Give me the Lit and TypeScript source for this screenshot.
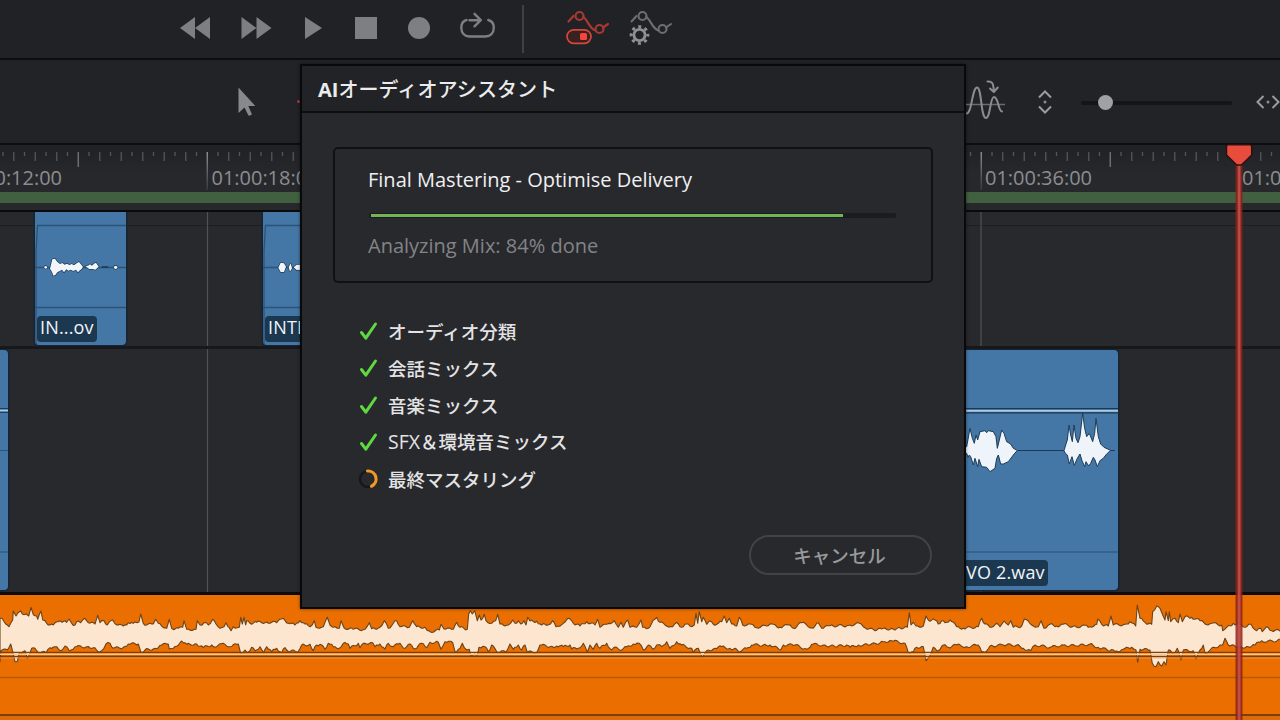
import { LitElement, html, svg, css } from "lit";
import { customElement, property } from "lit/decorators.js";

/* Peak outlines as flat x,y lists, stored in thirds of a pixel. */
type Part = { x: number; y: number; d: string };

const TOP: Part[] = [
  { x: 0, y: 580, d: "0,115 6,115 27,140 38,120 40,93 48,108 62,93 72,104 86,108 93,82 100,104 110,108 113,118 123,93 128,120 140,130 160,135 180,122 186,127 194,122 200,127 207,117 215,130 225,135 235,123 242,128 255,115 265,128 285,132 293,106 300,128 312,122 322,135 338,120 350,135 370,138 385,128 400,130 417,126 422,102 430,130 440,135 460,132 467,118 475,130 500,145 508,118 515,145 535,145 548,142 552,122 560,148 588,148 592,122 600,135 612,128 625,135 638,118 648,132 660,145 672,140 678,128 693,152 700,140 718,142 722,112 727,132 732,112 737,135 740,122 750,130 770,127 800,126 830,128 850,115 865,130 885,135 900,122 915,132 930,140 943,122 948,142 970,140 982,112 990,135 1000,142 1018,145 1023,122 1032,143 1060,148 1095,148 1108,128 1115,146 1140,142 1153,122 1165,145 1180,130 1190,122 1200,140 1228,142 1238,122 1250,140 1275,142 1288,153" },
  { x: 430, y: 590, d: "0,125 28,120 33,103 42,117 70,118 80,97 90,112 112,118 116,72 121,62 127,72 134,62 142,92 148,75 153,90 163,73 168,92 185,100 197,92 203,73 210,102 235,105 248,90 255,100 265,92 272,102 282,92 288,105 293,82 300,93 320,94 335,105 355,104 368,92 378,110 400,100 418,85 430,100 450,108 470,95 495,105 503,88 510,112 530,103 553,92 565,112 573,97 580,112 593,90 600,112 620,112 633,90 638,112 655,115 665,100 680,82 690,97 705,105 728,110 740,97 755,112 770,102 785,110 793,105 798,70 803,100 808,65 815,95 820,82 830,103 838,93 850,103 865,100 875,95 883,78 890,98 898,85 905,102 920,108 928,82 938,105 960,102 975,112 1010,108 1030,103 1050,112 1075,105 1090,115 1115,98 1130,105 1150,115 1165,98 1175,115 1200,107 1250,107 1258,106" },
  { x: 850, y: 590, d: "0,105 28,100 40,110 75,122 100,115 130,118 160,115 172,112 178,68 183,105 190,97 198,108 220,108 228,78 235,90 255,90 265,102 275,92 285,98 300,90 320,110 340,115 385,110 395,85 405,102 420,112 440,100 450,110 462,93 475,105 482,92 490,112 515,108 523,87 545,105 565,110 573,92 582,115 600,103 620,108 640,103 680,112 700,105 715,112 740,103 743,87 755,103 775,108 783,78 790,105 825,103 840,95 857,108 862,45 870,85 885,97 905,103 908,65 920,48 930,55 937,72 945,90 948,65 955,92 958,65 962,95 975,85 985,98 990,72 997,95 1005,80 1025,82 1050,92 1065,102 1085,100 1115,105 1118,122 1130,112 1150,100 1190,110 1203,103 1220,122 1232,115 1237,125 1250,110 1265,122 1296,122" },
];

const BOTTOM: Part[] = [
  { x: 0, y: 580, d: "0,245 3,212 22,210 32,192 38,215 45,245 52,245 58,218 75,212 82,235 95,205 105,205 115,218 138,218 150,203 165,200 180,212 195,198 208,212 225,200 260,200 285,203 297,217 305,212 318,192 330,190 340,205 370,202 385,192 415,192 423,217 435,210 465,205 485,195 505,192 508,207 520,205 545,183 560,193 590,192 610,203 635,195 650,200 670,190 690,200 715,192 722,220 735,210 742,218 755,202 765,212 780,200 790,218 800,200 815,215 830,205 845,218 855,203 870,215 880,210 893,217 905,195 930,193 940,212 950,195 960,193 975,208 985,190 1000,200 1018,205 1030,190 1045,192 1050,205 1075,190 1080,203 1090,190 1118,188 1125,200 1140,192 1155,207 1165,190 1180,200 1200,190 1215,205 1230,192 1245,207 1265,190 1280,203 1288,190" },
  { x: 430, y: 590, d: "0,157 25,157 33,178 45,155 68,158 75,185 90,175 97,160 110,180 118,178 122,196 142,196 147,172 165,170 175,185 185,165 200,185 215,182 228,187 240,162 250,178 265,165 275,180 285,165 292,187 322,185 330,165 360,170 380,168 400,170 420,165 425,177 445,175 460,160 472,187 480,165 490,178 500,160 510,175 530,160 545,180 560,172 575,180 590,170 610,162 628,160 640,180 655,165 668,178 680,165 695,170 710,155 720,175 740,155 755,165 785,175 790,187 805,175 817,202 830,182 855,175 875,170 900,175 920,178 928,187 935,182 950,175 965,165 1000,165 1020,165 1052,180 1060,165 1095,165 1130,178 1145,163 1180,165 1215,170 1250,165 1258,168" },
  { x: 850, y: 590, d: "0,172 25,165 60,165 100,155 125,152 165,160 175,188 190,185 200,172 220,170 228,212 243,190 250,172 265,182 280,165 295,172 320,165 350,170 385,165 395,185 410,183 420,168 460,165 500,165 520,175 542,182 555,165 600,172 640,165 680,168 720,162 745,172 780,182 800,183 820,178 845,172 858,180 863,217 870,178 900,180 907,220 918,230 925,215 935,228 942,215 948,225 955,180 970,190 982,175 993,210 1000,180 1020,185 1030,182 1038,207 1050,180 1060,165 1065,190 1080,180 1110,165 1118,165 1125,145 1135,165 1165,172 1195,170 1215,165 1235,152 1250,155 1296,150" },
];

const TRACK_TOP = 595;

function outline(parts: Part[], phase: number): number[][] {
  const key: number[][] = [];
  for (const p of parts) {
    for (const pair of p.d.split(" ")) {
      const [x, y] = pair.split(",").map(Number);
      key.push([p.x + x / 3, p.y + y / 3 - TRACK_TOP]);
    }
  }
  const out: number[][] = [];
  key.forEach(([x, y], i) => {
    out.push([x, y]);
    const next = key[i + 1];
    if (!next) return;
    const steps = Math.floor((next[0] - x) / 1.6);
    for (let s = 1; s < steps; s++) {
      const t = s / steps;
      const wobble = Math.sin((i * 7 + s * 5 + phase) * 2.3) * 1.3;
      out.push([x + (next[0] - x) * t, y + (next[1] - y) * t + wobble]);
    }
  });
  return out;
}

const MUSIC = [...outline(TOP, 0), ...outline(BOTTOM, 4).reverse()]
  .map(([x, y]) => `${x.toFixed(1)},${y.toFixed(1)}`)
  .join(" ");

const ICONS = {
  rewind: { w: 30, h: 22, body: svg`<path fill="currentColor" d="M15 0v22L0 11zM30 0v22L15 11z"/>` },
  forward: { w: 31, h: 22, body: svg`<path fill="currentColor" d="M.5 0v22l15-11zM15.500 0v22l15-11z"/>` },
  play: { w: 17, h: 22, body: svg`<path fill="currentColor" d="M0 0v22l17-11z"/>` },
  stop: { w: 22, h: 22, body: svg`<path fill="currentColor" d="M0 0h22v22H0z"/>` },
  record: { w: 22, h: 22, body: svg`<circle fill="currentColor" cx="11" cy="11" r="11"/>` },
  loop: {
    w: 36, h: 28,
    body: svg`<g fill="none" stroke="currentColor" stroke-width="2.400" stroke-linecap="round" stroke-linejoin="round"><path d="M6.500 8C3 9 1.300 12 1.300 15.500c0 5.500 3.200 9 8 9h16c5 0 8.500-3.500 8.500-9 0-3.800-2-6.500-5.500-7.500"/><path d="M9.500 8.200H20M14.500 1.800l6.300 6.300-6.300 6.200"/></g>`,
  },
  autoOn: {
    w: 43, h: 36,
    body: svg`<g fill="none" stroke="#a83831" stroke-width="2.200"><path d="M2.500 11.500l5-5.500M17.500 7c5 4 6 12 12 13.500M37 17.500l5-3.500" stroke-linecap="round"/><circle cx="13.500" cy="6" r="4"/><circle cx="33.500" cy="19" r="4"/></g><rect x="1" y="19.800" width="24" height="13.500" rx="6.700" fill="#3a2020" stroke="#d4473a" stroke-width="1.700"/><rect x="14" y="23" width="7" height="7" rx="1.500" fill="#f4473a"/>`,
  },
  autoSetup: {
    w: 43, h: 36,
    body: svg`<g fill="none" stroke="#6d6e70" stroke-width="2.100"><path d="M2.500 11.500l5-5.500M17.500 7c5 4 6 12 12 13.500M37 17.500l5-3.500" stroke-linecap="round"/><circle cx="13.500" cy="6" r="4"/><circle cx="33.500" cy="19" r="4"/></g><g fill="none" stroke="#8f9092"><circle cx="10.500" cy="25" r="5.600" stroke-width="2.800"/><circle cx="10.500" cy="25" r="8.300" stroke-width="3" stroke-dasharray="3 3.519" stroke-dashoffset="1.500"/></g>`,
  },
  pointer: { w: 20, h: 30, body: svg`<path fill="currentColor" d="M.5.500v25.500l6-5.500 3.800 7.800q1.500 1.200 3.600-1l-3.600-8.300h7z"/>` },
  ripple: {
    w: 40, h: 42,
    body: svg`<g fill="none" stroke="#8b8c8e" stroke-width="2" stroke-linecap="round" stroke-linejoin="round"><path d="M0 25.500h38.500" stroke="#6a6b6d" stroke-width="1.300"/><path d="M0 34.500C6 36 6 8.500 11 8.500S14.500 39 20 39c4.500 0 4-21 8-21 4.500 0 4 14 8 14.500"/><path d="M21.500 2.500c4-.5 6 1 6.300 9M24 9.500l3.800 3.500 4-4.500"/></g>`,
  },
  vertical: {
    w: 16, h: 26,
    body: svg`<g fill="none" stroke="#9b9c9e" stroke-width="2"><path d="M2 8.500L8 2.500l6 6M2 17.500l6 6 6-6"/></g><circle cx="8" cy="13" r="1.500" fill="#8a8b8d"/>`,
  },
  horizontal: {
    w: 26, h: 16,
    body: svg`<g fill="none" stroke="#9b9c9e" stroke-width="2"><path d="M8.500 2L2.500 8l6 6M17.500 2l6 6-6 6"/></g><circle cx="13" cy="8" r="1.500" fill="#8a8b8d"/>`,
  },
  check: { w: 20, h: 20, body: svg`<path d="M3.500 11.500l4.300 5.700L17.500 3" fill="none" stroke="#60d83f" stroke-width="3" stroke-linecap="round" stroke-linejoin="round"/>` },
  spinner: {
    w: 20, h: 20,
    body: svg`<circle cx="10" cy="10" r="8" fill="none" stroke="#17181a" stroke-width="2.600"/><path d="M9.500 2a8 8 0 0 1 4 15.200" fill="none" stroke="#f09a26" stroke-width="3.200" stroke-linecap="round"/>`,
  },
};

type IconName = keyof typeof ICONS;

@customElement("ui-icon")
export class UiIcon extends LitElement {
  @property() name: IconName = "play";
  static styles = css`
    :host { display: block; flex: none; }
    svg { display: block; overflow: visible; }
  `;
  render() {
    const i = ICONS[this.name];
    return html`<svg width=${i.w} height=${i.h} viewBox="0 0 ${i.w} ${i.h}">${i.body}</svg>`;
  }
}

@customElement("time-ruler")
export class TimeRuler extends LitElement {
  static styles = css`
    :host { display: block; height: 47px; position: relative; background: linear-gradient(#202125, #27282c 60%); }
    svg { display: block; }
    text { font: 20px "Open Sans", "Noto Sans", sans-serif; fill: #8c8d90; }
  `;
  render() {
    const ticks = [];
    for (let i = 0; i < 124; i++) {
      const x = -51 + i * 10.75;
      const big = i % 24 === 0;
      const h = big ? 38 : i % 12 === 0 ? 15 : i % 2 === 0 ? 9 : 4;
      ticks.push(svg`<rect x=${x - 0.4} y="7" width="1.300" height=${h} fill=${big ? "url(#fade)" : h === 15 ? "#77787b" : "#55565a"}/>`);
    }
    const labels: [number, string][] = [[-45, "01:00:12:00"], [211.5, "01:00:18:00"], [985, "01:00:36:00"], [1242, "01:00:42:00"]];
    return html`<svg width="1280" height="47">
      <defs><linearGradient id="fade" x1="0" y1="0" x2="0" y2="1"><stop offset="0" stop-color="#98999b"/><stop offset="1" stop-color="#3a3b3f"/></linearGradient></defs>
      ${ticks}
      ${labels.map(([x, t]) => svg`<text x=${x} y="40" textLength="107" lengthAdjust="spacingAndGlyphs">${t}</text>`)}
    </svg>`;
  }
}

@customElement("assistant-dialog")
export class AssistantDialog extends LitElement {
  @property({ type: Number }) progress = 84;
  static styles = css`
    :host {
      display: flex; flex-direction: column; box-sizing: border-box;
      width: 666px; height: 545px; border: 2px solid #08090b; background: #28292d;
      font-family: "Open Sans", "Noto Sans CJK JP", sans-serif; color: #e4e4e5;
      box-shadow: 0 0 3px rgba(0, 0, 0, 0.5);
    }
    .title { height: 47px; box-sizing: border-box; border-bottom: 2px solid #0d0e10; background: #222327; padding-left: 16px; font-size: 20px; font-weight: 700; line-height: 45px; white-space: nowrap; color: #ececed; }
    .kana { font-family: "Noto Sans CJK JP", sans-serif; font-weight: 500; letter-spacing: 0.1px; }
    .card { margin: 34px 31px 0; height: 136px; box-sizing: border-box; border: 2px solid #101114; border-radius: 5px; padding: 0 34px 0 33px; }
    .stage { margin: 17px 0 0; font-size: 20px; line-height: 28px; white-space: nowrap; letter-spacing: 0; color: #f0f0f1; }
    .bar { height: 5px; margin: 19px 1px 0 1px; background: #1b1c1f; border-radius: 2px; padding: 1px 1px 1px 2px; box-sizing: border-box; }
    .fill { height: 3px; background: #71b554; }
    .status { margin-top: 14px; font-size: 20px; line-height: 28px; color: #838487; white-space: nowrap; letter-spacing: 0; }
    .steps { list-style: none; margin: 30px 0 0; padding: 0 0 0 56px; }
    .step { display: flex; align-items: center; gap: 10px; height: 36.800px; font-size: 18.500px; line-height: 36px; white-space: nowrap; }
    .word { font-family: "Noto Sans CJK JP", sans-serif; font-weight: 500; }
    .latin { font-family: "Open Sans", sans-serif; font-size: 19.500px; }
    .foot { flex: 1; display: flex; justify-content: flex-end; align-items: flex-end; padding: 0 32px 32px 0; }
    .cancel { width: 183px; height: 40px; border: 2px solid #424347; border-radius: 20px; background: none; color: #98999b; font: 500 18.500px "Noto Sans CJK JP", sans-serif; padding: 0 2px 0 0; }
  `;
  render() {
    const steps: [IconName, string, string][] = [
      ["check", "", "オーディオ分類"],
      ["check", "", "会話ミックス"],
      ["check", "", "音楽ミックス"],
      ["check", "SFX", "＆環境音ミックス"],
      ["spinner", "", "最終マスタリング"],
    ];
    return html`
      <div class="title">AI<span class="kana">オーディオアシスタント</span></div>
      <div class="card">
        <div class="stage">Final Mastering - Optimise Delivery</div>
        <div class="bar"><div class="fill" style="width:${this.progress + 6}%"></div></div>
        <div class="status">Analyzing Mix: ${this.progress}% done</div>
      </div>
      <ul class="steps">
        ${steps.map(([icon, latin, label]) => html`<li class="step"><ui-icon name=${icon}></ui-icon><span class="word">${latin ? html`<span class="latin">${latin}</span>` : ""}${label}</span></li>`)}
      </ul>
      <div class="foot"><button class="cancel">キャンセル</button></div>
    `;
  }
}

@customElement("app-root")
export class AppRoot extends LitElement {
  static styles = css`
    :host { display: block; }
    .app { position: relative; width: 1280px; height: 720px; overflow: hidden; display: flex; flex-direction: column; background: #28292d; color: #858688; font-family: "Open Sans", "Noto Sans", sans-serif; }
    .transport { height: 60px; flex: none; box-sizing: border-box; border-bottom: 2px solid #0c0d0f; background: #212226; display: flex; align-items: center; padding: 0 0 3px 180px; color: #7e7f81; }
    .forward { margin-left: 31px; }
    .play { margin-left: 33px; }
    .stop { margin-left: 33px; }
    .record { margin-left: 31px; }
    .loop { margin: -4px 0 0 30px; }
    .rule { width: 2px; height: 48px; margin: 3px 42px 0 26px; background: #404145; }
    .setup { margin-left: 20px; }
    .tools { height: 85px; flex: none; box-sizing: border-box; border-bottom: 2px solid #0c0d0f; background: #222327; display: flex; align-items: center; padding-left: 238px; color: #88898b; }
    .marker { width: 3px; height: 3px; flex: none; border-radius: 2px; background: #b8332c; margin-left: 39px; }
    .ripple { margin: -3px 0 0 666px; }
    .vertical { margin-left: 31px; }
    .slider { width: 151px; height: 4px; flex: none; margin: 2px 0 0 28px; background: #141517; border-radius: 2px; display: flex; align-items: center; }
    .knob { width: 15px; height: 15px; border-radius: 50%; background: #a0a1a3; margin-left: 17px; }
    .horizontal { margin-left: 23px; }
    .cache { height: 11px; flex: none; background: #406040; }
    .gap { height: 7px; flex: none; background: #27282c; border-bottom: 2px solid #090a0c; }
    .track { position: relative; flex: none; box-sizing: border-box; border-bottom: 3px solid #17181b; overflow: hidden; }
    .one { height: 137px; }
    .two { height: 246px; border-bottom-color: #0c0c0e; }
    .music { height: 121px; border-bottom: 2px solid #7a3e08; background: #ea6f00; }
    .next { flex: 1; background: #de6c06; }
    .lines { position: absolute; left: 0; top: 0; width: 100%; height: 100%; display: block; }
    .clip { position: absolute; background: #4477a6; border-radius: 0 0 4px 4px; box-shadow: 0 0 0 1.500px #172433; display: flex; align-items: flex-end; overflow: hidden; color: #f0f4f8; }
    .clip svg { position: absolute; left: 0; top: 0; }
    .intro-a { left: 35px; top: 0; width: 91px; height: 133px; }
    .intro-b { left: 263px; top: 0; width: 91px; height: 133px; }
    .vo-a { left: -92px; top: 1px; width: 100px; height: 240px; border-radius: 4px; }
    .vo-b { left: 900px; top: 1px; width: 218px; height: 240px; border-radius: 4px; }
    .name { position: relative; margin: 0 0 3px 2px; padding: 0 3px; height: 26px; border-radius: 4px; background: #1c3850; font-size: 18px; line-height: 22px; white-space: nowrap; letter-spacing: 0.170px; }
    .vo-b .name { margin-left: 47px; padding-left: 19px; margin-bottom: 4px; line-height: 24px; }
    .playhead { position: absolute; left: 1225px; top: 144px; display: block; }
    .dialog { position: absolute; left: 300px; top: 64px; }
  `;

  clipArt(kind: "a" | "b") {
    return html`<svg width="91" height="133">
      <path d="M1 133V40L2.500 13.500H91M0 95.500H91M0 55.500H91" fill="none" stroke="#2b5379" stroke-width="1.300"/>
      ${kind === "a"
        ? svg`<g transform="translate(-35 -72) scale(.33333)" fill="#f2f6fa" stroke="#1d3a56" stroke-width="4" paint-order="stroke" stroke-linejoin="round"><circle cx="137" cy="382" r="4"/><path d="M152 378L157 358 165 356 172 366 180 372 187 369 194 374 201 371 208 375 215 372 222 376 230 370 237 366 244 374 249 381 244 388 238 392 234 397 228 389 220 393 212 389 205 392 199 388 192 397 186 389 179 393 172 397 166 405 160 407 156 396 150 386zM256 379L264 377 270 373 276 377 282 371 288 368 296 380 286 389 278 387 268 387zM305 381h20"/><circle cx="347" cy="382" r="5"/></g>`
        : svg`<g transform="translate(-263 -72) scale(.33333)" fill="#f2f6fa" stroke="#1d3a56" stroke-width="4" paint-order="stroke" stroke-linejoin="round"><path d="M835 383L842 368 852 370 858 380 852 396 842 396zM866 382L872 370 876 385 870 395zM881 382L890 374 905 374 930 378 930 388 890 390z"/></g>`}
    </svg>`;
  }

  render() {
    return html`
      <div class="app">
        <div class="transport">
          <ui-icon name="rewind"></ui-icon>
          <ui-icon class="forward" name="forward"></ui-icon>
          <ui-icon class="play" name="play"></ui-icon>
          <ui-icon class="stop" name="stop"></ui-icon>
          <ui-icon class="record" name="record"></ui-icon>
          <ui-icon class="loop" name="loop"></ui-icon>
          <div class="rule"></div>
          <ui-icon name="autoOn"></ui-icon>
          <ui-icon class="setup" name="autoSetup"></ui-icon>
        </div>
        <div class="tools">
          <ui-icon name="pointer"></ui-icon>
          <div class="marker"></div>
          <ui-icon class="ripple" name="ripple"></ui-icon>
          <ui-icon class="vertical" name="vertical"></ui-icon>
          <div class="slider"><div class="knob"></div></div>
          <ui-icon class="horizontal" name="horizontal"></ui-icon>
        </div>
        <time-ruler></time-ruler>
        <div class="cache"></div>
        <div class="gap"></div>
        <div class="track one">
          <svg class="lines"><path d="M0 13.500H1280" stroke="#1d1e21"/><path d="M207.500 0V140M981 0V140" stroke="#505155" stroke-width="1.200"/></svg>
          <div class="clip intro-a">${this.clipArt("a")}<div class="name">IN...ov</div></div>
          <div class="clip intro-b">${this.clipArt("b")}<div class="name">INTRO.mov</div></div>
        </div>
        <div class="track two">
          <svg class="lines"><path d="M207.500 0V250M981 0V250" stroke="#505155" stroke-width="1.200"/></svg>
          <div class="clip vo-a"><svg width="100" height="240"><path d="M0 60.500H100" stroke="#a9c8e4" stroke-width="1.600"/><path d="M0 58.500H100M0 62.500H100" stroke="#1f3d5a"/><path d="M0 100.500H100M0 202H100" stroke="#2b5379"/></svg></div>
          <div class="clip vo-b">
            <svg width="218" height="240">
              <path d="M0 60.800H218" stroke="#a9c8e4" stroke-width="2"/><path d="M0 58.700H218M0 62.800H218" stroke="#1b3852" stroke-width="1.200"/><path d="M0 202H218" stroke="#2b5379"/><path d="M0 100.500H215" stroke="#1d3a56"/>
              <g transform="translate(40 -10) scale(.33333)" fill="#eef4fa" stroke="#1d3a56" stroke-width="3" stroke-linejoin="round"><path d="M70 320L80 320 90 265 97 295 103 310 108 285 113 300 120 275 135 272 140 278 145 272 160 275 168 290 172 325 178 300 185 270 192 280 200 305 212 312 220 325 232 331 220 345 205 365 190 372 182 372 175 345 170 355 165 385 150 395 140 382 125 380 117 358 113 380 105 355 100 375 92 350 88 345 84 352 80 340 70 340z"/><path d="M372 332L378 312 382 300 387 255 392 285 397 305 402 255 408 295 414 308 420 290 428 220 434 265 440 290 448 280 458 305 464 280 468 235 475 290 482 312 492 322 512 331 500 342 490 355 480 362 472 380 465 360 460 352 452 370 446 378 438 365 434 380 426 362 420 342 412 355 403 376 396 350 388 372 382 345 376 340z"/></g>
            </svg>
            <div class="name">VO 2.wav</div>
          </div>
        </div>
        <div class="track music">
          <svg class="lines">
            <polygon points=${MUSIC} fill="#fde6cf" stroke="#6a431b" stroke-width="1.100" stroke-linejoin="round"/>
            <path d="M0 57.300H1280M0 61.500H1280" stroke="#7c400a" stroke-width="1.300"/>
            <path d="M0 59.300H1280" stroke="#fbc794" stroke-width="1.500"/>
            <path d="M0 63H1280" stroke="#f9a45a" stroke-width=".7"/>
            <path d="M0 82.500H1280" stroke="#b65a0c" stroke-width="1.300"/>
          </svg>
        </div>
        <div class="next"></div>
        <svg class="playhead" width="28" height="576">
          <path d="M10.500 20h7v556h-7z" fill="#8c211b" fill-opacity=".85"/>
          <path d="M12.700 20h2.800v556h-2.800z" fill="#cf5a50" fill-opacity=".75"/>
          <path d="M1.500 2.500Q1.500.800 3.200.800H25Q26.700.800 26.700 2.500V11L16.500 21H11.700L1.500 11z" fill="#e84c3d" stroke="#2c0f0f" stroke-width="1.500"/>
        </svg>
        <assistant-dialog class="dialog"></assistant-dialog>
      </div>
    `;
  }
}
